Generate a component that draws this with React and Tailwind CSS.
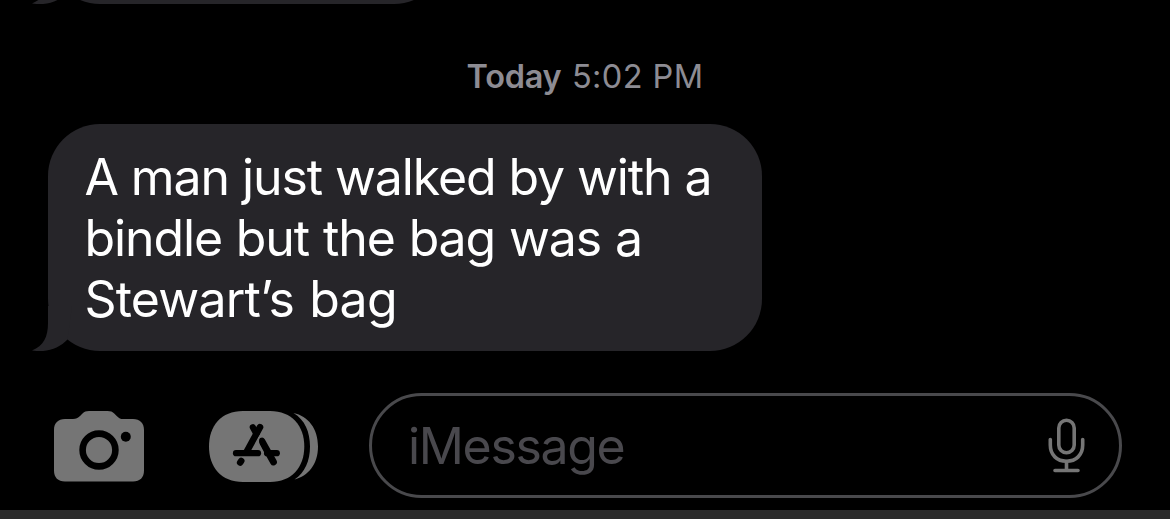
import React from 'react';

const Tail = () => (
  <svg
    className="absolute bottom-0 -left-4 w-10 h-[50px] text-[#262529]"
    viewBox="0 0 40 50"
    fill="currentColor"
    aria-hidden="true"
  >
    <path d="M16 5V22C16 36 11.500 45 0 49.400C14 52 27 47.500 35.500 38.500L40 5Z" />
  </svg>
);

const Bubble = ({ className = '', children }) => (
  <div className={`relative shrink-0 rounded-[52px] bg-[#262529] ${className}`}>
    <Tail />
    {children}
  </div>
);

const CameraIcon = () => (
  <svg className="w-[91px] h-[71px] text-[#757575]" viewBox="0 0 91 71" aria-hidden="true">
    <path
      fill="currentColor"
      d="M11 8H19C22 8 24 7 26 5L28.500 2.500C30.500 .7 32 0 35 0H53.500C56.500 0 58.500 .7 60.500 2.700L63 5.200C65 7.200 66.500 8 69.500 8H79C86 8 90 12 90 19V59.500C90 66.500 86 70.500 79 70.500H11C4 70.500 0 66.500 0 59.500V19C0 12 4 8 11 8Z"
    />
    <circle cx="45" cy="39" r="16.400" fill="none" stroke="#000" strokeWidth="6.600" />
    <circle cx="71.800" cy="25.700" r="5" fill="#000" />
  </svg>
);

const AppsIcon = () => (
  <svg className="w-[110px] h-[72px] text-[#757575]" viewBox="0 0 110 72" aria-hidden="true">
    <path
      fill="currentColor"
      d="M34 0H61C83 0 95.300 15 95.300 35.500S83 71 61 71H34C12 71 0 56 0 35.500S12 0 34 0Z"
    />
    <path fill="currentColor" d="M84.500 2C99 5 109 17.500 109 35.500S99 65 85.500 68.500C96 61.500 101 50 101 35.500S96 9 84.500 2Z" />
    <g fill="none" stroke="#000" strokeWidth="6.200" strokeLinecap="round">
      <path d="M51 16.200L37.500 41" strokeWidth="6.600" />
      <path d="M43.800 16.200L47.500 23" />
      <path d="M27 42.200H49" />
      <path d="M58 42.200H67.800" />
      <path d="M52.800 30L64.500 51" strokeWidth="6.800" />
      <path d="M32.200 50L31.200 51.500" strokeWidth="6.600" />
    </g>
    <path
      d="M51.500 24C49 28 48.600 30.500 50 33.500L54 42V46"
      fill="none"
      stroke="currentColor"
      strokeWidth="1.300"
    />
  </svg>
);

const MicIcon = () => (
  <svg
    className="w-[38px] h-[56px] text-[#757575]"
    viewBox="0 0 38 56"
    fill="none"
    stroke="currentColor"
    strokeWidth="3.600"
    strokeLinecap="round"
    aria-hidden="true"
  >
    <rect x="10.800" y="2.200" width="15.400" height="32.500" rx="7.700" />
    <path d="M2.300 21.500V27C2.300 37 9 43.200 18.500 43.200S34.700 37 34.700 27V21.500" />
    <path d="M18.500 43.500V52.500M7 52.500H30" />
  </svg>
);

const App = () => (
  <div className="flex flex-col w-full h-[519px] overflow-hidden bg-black font-['Inter',sans-serif]">
    <div className="flex flex-col justify-end items-start h-1 pl-12">
      <Bubble className="w-[398px] h-[120px]" />
    </div>

    <div className="flex justify-center items-center h-[120px] pt-[27px] text-[32.5px] text-[#8d8c93]">
      <p className="whitespace-nowrap tracking-[0.4px]">
        <span className="font-semibold tracking-[-0.3px]">Today</span>
        <span className="ml-[1px]"> 5:02 PM</span>
      </p>
    </div>

    {/* Received message */}
    <div className="flex pl-12">
      <Bubble className="w-[714px] h-[227px] pt-[23px] pl-[36.5px]">
        <p className="relative text-[50px] leading-[61px] text-white whitespace-nowrap">
          <span className="block tracking-[-1.1px]">A man just walked by with a</span>
          <span className="block tracking-[-1.12px] [word-spacing:1px]">bindle but the bag was a</span>
          <span className="block tracking-[-0.8px] [word-spacing:2px]">Stewart’s bag</span>
        </p>
      </Bubble>
    </div>

    {/* Compose bar */}
    <div className="flex items-center h-[105px] mt-[42px] pl-[54px] pr-12">
      <button aria-label="Camera" className="pt-0.5">
        <CameraIcon />
      </button>
      <button aria-label="Apps" className="ml-16 pt-0.5">
        <AppsIcon />
      </button>
      <div className="flex flex-1 justify-between items-center h-full ml-[50px] pl-[36px] pr-[33px] rounded-full border-3 border-[#49494c]">
        <span className="pt-0.5 text-[50px] leading-[61px] tracking-[-1.35px] text-[#49484d]">iMessage</span>
        <MicIcon />
      </div>
    </div>

    <div className="h-[9px] mt-auto bg-[#2b2b2b]" />
  </div>
);

export default App;
